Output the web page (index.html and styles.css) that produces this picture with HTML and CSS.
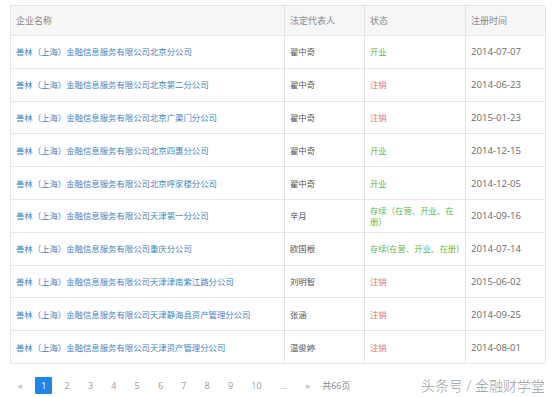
FILE: index.html
```html
<!DOCTYPE html>
<html lang="zh-CN">
<head>
<meta charset="utf-8">
<title>企业列表</title>
<link rel="stylesheet" href="styles.css">
</head>
<body>
<div class="page">
  <div class="grid">
    <div class="th">企业名称</div>
    <div class="th">法定代表人</div>
    <div class="th">状态</div>
    <div class="th">注册时间</div>

    <div class="td name">善林（上海）金融信息服务有限公司北京分公司</div>
    <div class="td rep">翟中奇</div>
    <div class="td st ok">开业</div>
    <div class="td date">2014-07-07</div>

    <div class="td name">善林（上海）金融信息服务有限公司北京第二分公司</div>
    <div class="td rep">翟中奇</div>
    <div class="td st bad">注销</div>
    <div class="td date">2014-06-23</div>

    <div class="td name">善林（上海）金融信息服务有限公司北京广渠门分公司</div>
    <div class="td rep">翟中奇</div>
    <div class="td st bad">注销</div>
    <div class="td date">2015-01-23</div>

    <div class="td name">善林（上海）金融信息服务有限公司北京四惠分公司</div>
    <div class="td rep">翟中奇</div>
    <div class="td st ok">开业</div>
    <div class="td date">2014-12-15</div>

    <div class="td name">善林（上海）金融信息服务有限公司北京呼家楼分公司</div>
    <div class="td rep">翟中奇</div>
    <div class="td st ok">开业</div>
    <div class="td date">2014-12-05</div>

    <div class="td name">善林（上海）金融信息服务有限公司天津第一分公司</div>
    <div class="td rep">辛月</div>
    <div class="td st ok">存续（在营、开业、在册）</div>
    <div class="td date">2014-09-16</div>

    <div class="td name">善林（上海）金融信息服务有限公司重庆分公司</div>
    <div class="td rep">欧国根</div>
    <div class="td st ok">存续(在营、开业、在册)</div>
    <div class="td date">2014-07-14</div>

    <div class="td name">善林（上海）金融信息服务有限公司天津津南紫江路分公司</div>
    <div class="td rep">刘明智</div>
    <div class="td st bad">注销</div>
    <div class="td date">2015-06-02</div>

    <div class="td name">善林（上海）金融信息服务有限公司天津静海县资产管理分公司</div>
    <div class="td rep">张涵</div>
    <div class="td st bad">注销</div>
    <div class="td date">2014-09-25</div>

    <div class="td name">善林（上海）金融信息服务有限公司天津资产管理分公司</div>
    <div class="td rep">温俊婷</div>
    <div class="td st bad">注销</div>
    <div class="td date">2014-08-01</div>
  </div>

  <div class="footer">
    <div class="pager">
      <span class="pg">«</span>
      <span class="pg active">1</span>
      <span class="pg">2</span>
      <span class="pg">3</span>
      <span class="pg">4</span>
      <span class="pg">5</span>
      <span class="pg">6</span>
      <span class="pg">7</span>
      <span class="pg">8</span>
      <span class="pg">9</span>
      <span class="pg">10</span>
      <span class="pg">…</span>
      <span class="pg">»</span>
      <span class="total">共66页</span>
    </div>
    <div class="mark">头条号 / 金融财学堂</div>
  </div>
</div>
</body>
</html>
```

FILE: styles.css
```css
html, body {
  margin: 0;
  padding: 0;
  background: #ffffff;
}

body {
  font-family: "Open Sans", "Noto Sans CJK SC", sans-serif;
  color: #555;
}

.page {
  padding: 5px 12px 0 10px;
}

.grid {
  display: grid;
  width: 535px;
  grid-template-columns: 274px 80px 101px 80px;
  grid-template-rows: 30px repeat(10, 32.8px);
  border-top: 1px solid #e4e4e4;
  border-left: 1px solid #e4e4e4;
  box-sizing: border-box;
}

.th,
.td {
  box-sizing: border-box;
  border-right: 1px solid #e4e4e4;
  border-bottom: 1px solid #e8e8e8;
  display: flex;
  align-items: center;
  padding: 0 4px 0 5px;
  font-size: 8.4px;
  line-height: 11px;
}

.th {
  background: #f6f6f6;
  color: #8a8a8a;
  font-size: 9px;
}

.name {
  color: #3f86c4;
}

.rep {
  color: #555;
}

.st {
  padding-right: 3px;
}

.ok {
  color: #5fb84f;
}

.bad {
  color: #e0766f;
}

.date {
  font-size: 9.6px;
  color: #6a6a6a;
}

.footer {
  display: flex;
  align-items: center;
  margin-top: 13px;
  padding-left: 2px;
}

.pager {
  display: flex;
  align-items: center;
  gap: 6.2px;
}

.pg {
  height: 17px;
  min-width: 17px;
  padding: 0 6px;
  box-sizing: border-box;
  display: flex;
  align-items: center;
  justify-content: center;
  font-size: 9px;
  color: #9a9a9a;
}

.pg.active {
  background: #1e86e8;
  color: #fff;
  border-radius: 1px;
}

.total {
  font-size: 9px;
  color: #8a8a8a;
}

.mark {
  margin-left: auto;
  font-size: 14px;
  color: #9c9c9c;
  font-weight: 300;
  line-height: 17px;
}
```
